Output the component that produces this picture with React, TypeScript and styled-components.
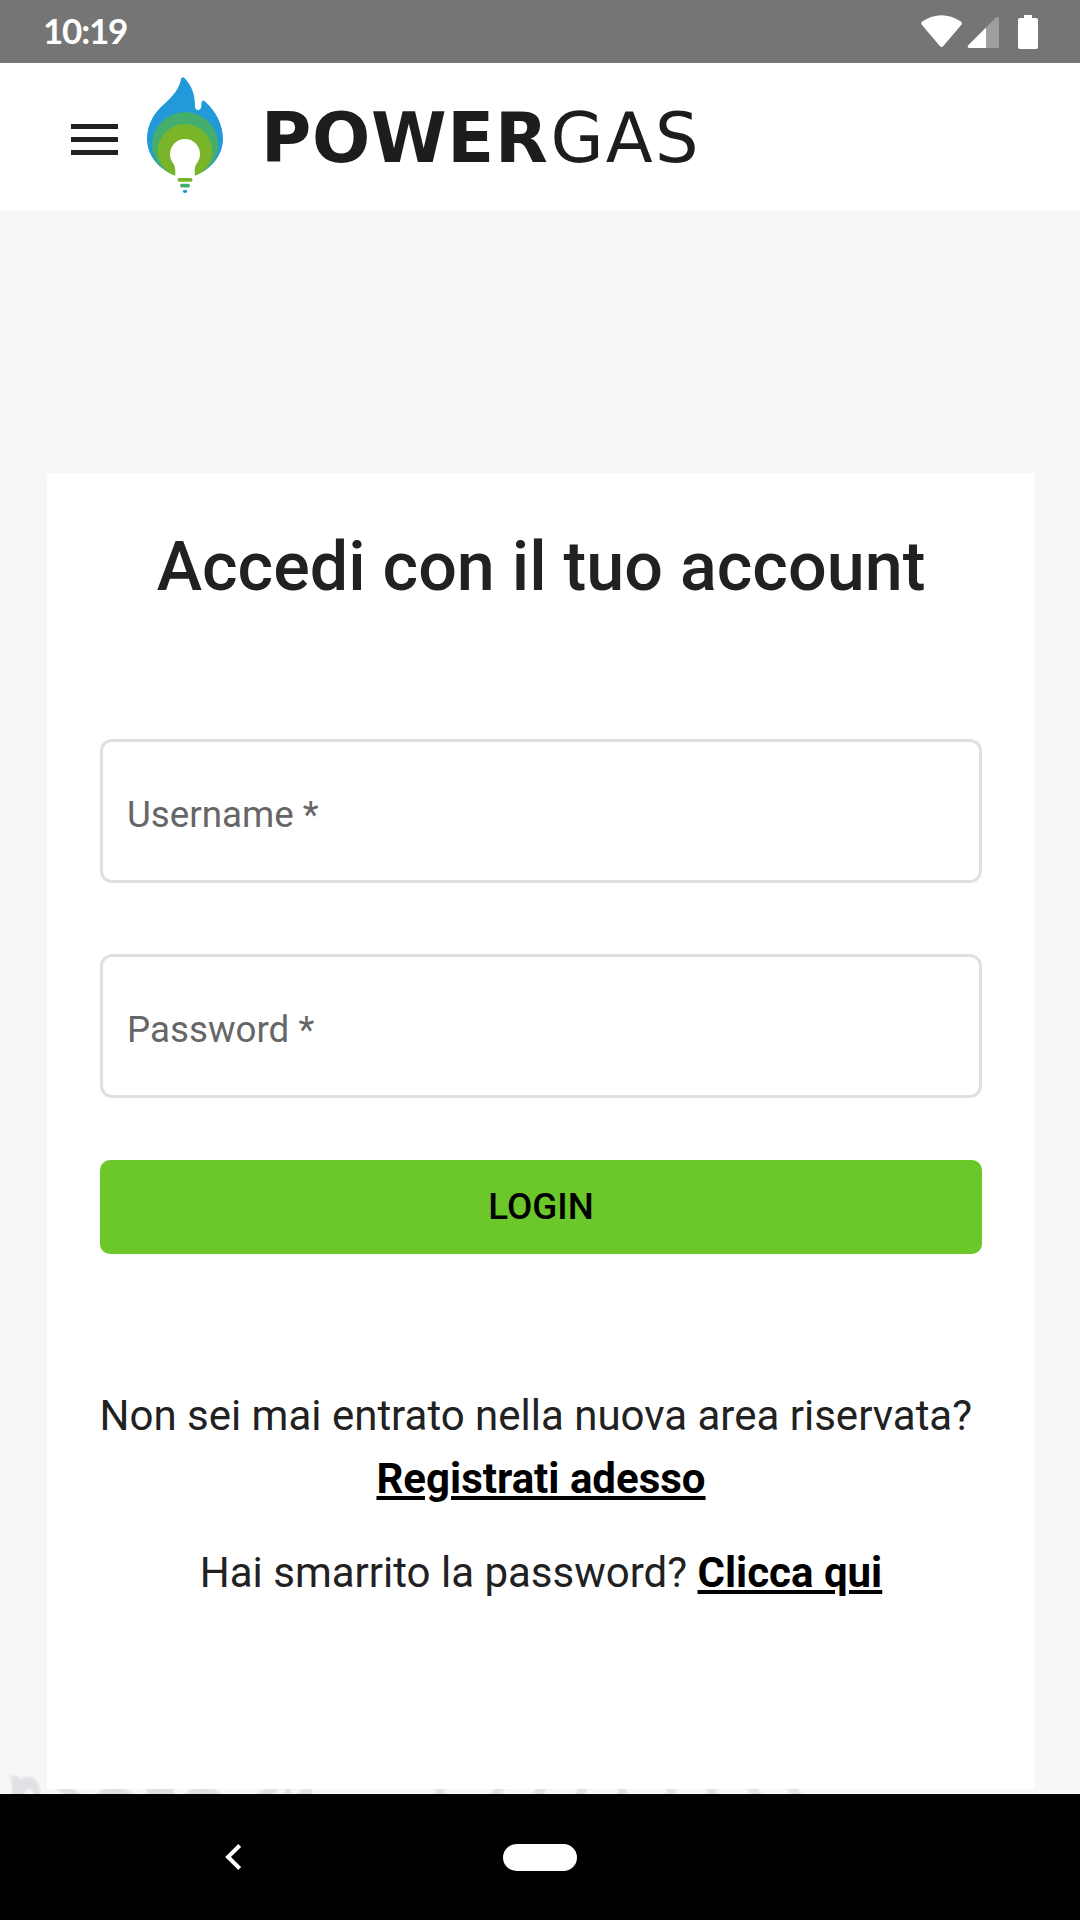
import React from "react";
import styled, { createGlobalStyle } from "styled-components";

const Global = createGlobalStyle`
  * { box-sizing: border-box; }
  body { margin: 0; background: #f7f7f7; font-family: Roboto, sans-serif; }
`;

const Screen = styled.div`
  width: 1080px;
  height: 1920px;
  display: flex;
  flex-direction: column;
  overflow: hidden;
  background: #f7f7f7;
  color: #212121;
`;

const StatusBar = styled.div`
  height: 63px;
  flex: none;
  display: flex;
  align-items: center;
  justify-content: space-between;
  padding: 0 41px 0 43px;
  background: #757575;
`;

const Clock = styled.span`
  color: #fff;
  font: 700 35px/60px Lato, sans-serif;
  height: 63px;
  letter-spacing: -1.2px;
`;

const Header = styled.header`
  height: 147px;
  flex: none;
  display: flex;
  align-items: flex-start;
  padding-left: 71px;
  background: #fff;
`;

const MenuButton = styled.button`
  width: 47px;
  height: 32px;
  margin: 61px 29px 0 0;
  padding: 0;
  border: 0;
  background: none;
  display: flex;
  flex-direction: column;
  gap: 8px;
`;

const Bar = styled.span`
  height: 5px;
  background: #212121;
`;

const Flame = styled.svg`
  margin-top: 14px;
  flex: none;
`;

const Wordmark = styled.div`
  margin: 35px 0 0 38px;
  font: 400 68.6px/80px "DejaVu Sans", sans-serif;
  letter-spacing: 2.2px;
  color: #1d1d1b;
  white-space: nowrap;
`;

const WordBold = styled.span`
  margin-right: 2px;
  font-weight: 700;
  letter-spacing: 0.7px;
`;

const Content = styled.main`
  flex: 1;
  min-height: 0;
  padding: 263px 45px 0 47px;
  overflow: hidden;
`;

const Card = styled.section`
  position: relative;
  z-index: 1;
  height: 1316px;
  padding: 54px 53px 0;
  background: #fff;
  text-align: center;
`;

const Title = styled.h1`
  margin: 0 -40px 131px;
  font: 500 68.25px/81px Roboto, sans-serif;
  white-space: nowrap;
`;

const Field = styled.label<{ $gap: number }>`
  height: 144px;
  margin-bottom: ${(p) => p.$gap}px;
  padding: 7px 24px 0;
  display: flex;
  align-items: center;
  border: 3px solid #e0e0e0;
  border-radius: 12px;
  font-size: 36.75px;
  color: #666;
`;

const LoginButton = styled.button`
  width: 100%;
  height: 94px;
  display: block;
  padding: 0;
  border: 0;
  border-radius: 10px;
  background: #6cc82a;
  color: #000;
  font: 500 36.75px/94px Roboto, sans-serif;
`;

const Paragraph = styled.p<{ $top: number }>`
  margin: ${(p) => p.$top}px -20px 0;
  font-size: 42px;
  line-height: 63px;
`;

const Link = styled.a`
  color: #000;
  font-weight: 700;
  text-decoration: underline;
`;

const Backdrop = styled.svg`
  display: block;
  margin: -27px 0 0 -47px;
  filter: blur(1.2px);
`;

const NavBar = styled.nav`
  position: relative;
  z-index: 1;
  height: 126px;
  flex: none;
  display: grid;
  grid-template-columns: 1fr 74px 1fr;
  align-items: center;
  background: #000;
`;

const Back = styled.svg`
  margin-left: 224px;
`;

const HomePill = styled.span`
  height: 27px;
  border-radius: 14px;
  background: #fff;
`;

export default function App() {
  return (
    <>
      <Global />
      <Screen>
        <StatusBar>
          <Clock>10:19</Clock>
          <svg width="118" height="36" viewBox="921 13 118 36" fill="#fff">
            <path d="M922.3 20.5Q941.5 7.8 960.8 20.5Q962.8 22 961.2 24L943.3 45Q941.5 47 939.8 45L922 24Q920.3 22 922.3 20.5Z" />
            <path d="M986 26.5V47H969.5Q966.3 46.5 968.5 44Z" />
            <path d="M986 26.5L995.8 16.8Q998.5 14.5 999 17.5V45.5Q999 47 997 47H986Z" opacity=".3" />
            <path d="M1024 14H1032V17H1036Q1038 17 1038 19V46Q1038 48 1036 48H1020Q1018 48 1018 46V19Q1018 17 1020 17H1024Z" />
          </svg>
        </StatusBar>
        <Header>
          <MenuButton aria-label="Menu"><Bar /><Bar /><Bar /></MenuButton>
          <Flame width="76" height="117" viewBox="147 77 76 117">
            <path fill="#2299d8" d="M175 175C158 169 147 155 147 139C147 126 153 114 162 106C173 97 180 87 181 79Q182 76 185 78.500C192 86 195 95 195 106Q195 110 198 110Q201 110 201.300 106Q201.300 98 205 101.500C216 111 223 125 223 139C223 155 211 170 195 175Z" />
            <path fill="#44ae6c" d="M175 175.500C160 170 151.700 158 151.700 145.500A33.400 33.400 0 0 1 218.500 145.500C218.500 158 210 170 195 175.500Z" />
            <path fill="#7ab529" d="M175 175.500C164 171.500 157.600 161 157.600 151.500A27.400 27.400 0 0 1 212.400 151.500C212.400 161 206 171.500 195 175.500Z" />
            <path fill="#fff" d="M175.300 177V170C175.300 163 170 162 170 154A15 15 0 0 1 200 154C200 162 194.700 163 194.700 170V177Z" />
            <rect fill="#7ab529" x="177.500" y="178" width="15" height="3.700" rx="1.800" />
            <rect fill="#44ae6c" x="180" y="183.700" width="10" height="3.800" rx="1.800" />
            <path fill="#2299d8" d="M183.400 190H186.700Q188.300 191 186.500 192.500Q185 193.700 183.500 192.500Q181.800 191 183.400 190Z" />
          </Flame>
          <Wordmark><WordBold>POWER</WordBold>GAS</Wordmark>
        </Header>
        <Content>
          <Card>
            <Title>Accedi con il tuo account</Title>
            <Field $gap={71}>Username *</Field>
            <Field $gap={62}>Password *</Field>
            <LoginButton>LOGIN</LoginButton>
            <Paragraph $top={130}>
              Non sei mai entrato nella nuova area riservata?&nbsp;<br />
              <Link>Registrati adesso</Link>
            </Paragraph>
            <Paragraph $top={31}>
              Hai smarrito la password? <Link>Clicca qui</Link>
            </Paragraph>
          </Card>
          <Backdrop width="1080" height="50" viewBox="0 1762 1080 50" fill="none" stroke="#dfe1e5" strokeWidth="9">
            <path fill="#dfe1e5" stroke="none" d="M10 1776Q16 1774 20 1779Q36 1771 40 1790V1812H34V1794Q30 1785 24 1794V1812H12V1784Z" />
            <path d="M58 1785L79 1798M257 1799L276 1787" />
            <path fill="#dfe1e5" stroke="none" d="M94 1799Q101 1786 114 1786Q129 1786 135 1799ZM147 1786H174V1799H147ZM181 1799Q190 1786 203 1786Q218 1786 224 1799ZM285 1786H291V1799H285ZM294 1799Q302 1786 312 1786V1799Z" />
            <path d="M440 1785V1800M502 1785L493 1799M544 1785L535 1799M583 1785L579 1799M622 1785L623 1799M671 1785V1799M710 1785L714 1799M750 1785L759 1799M790 1785L799 1799" />
          </Backdrop>
        </Content>
        <NavBar>
          <Back width="20" height="30" viewBox="224 1842 20 30" fill="none" stroke="#fff" strokeWidth="4">
            <path d="M239.700 1845.500L228 1857L239.700 1868.500" />
          </Back>
          <HomePill />
        </NavBar>
      </Screen>
    </>
  );
}
